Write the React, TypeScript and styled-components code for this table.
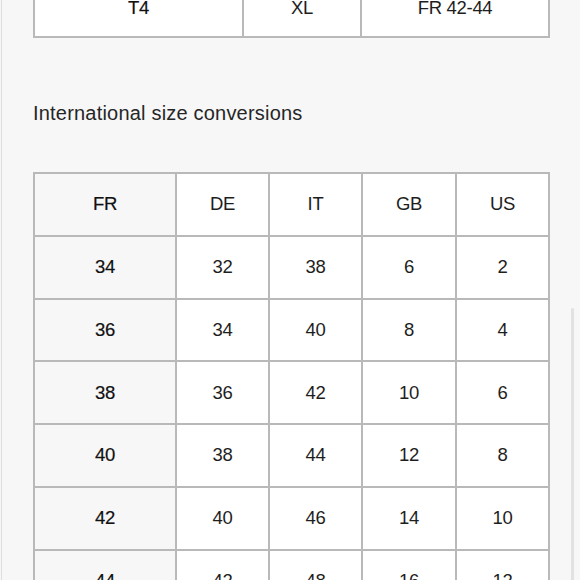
import React from "react";
import styled, { createGlobalStyle } from "styled-components";

const Global = createGlobalStyle`
  html, body { margin: 0; padding: 0; background: #f7f7f7; overflow: hidden; }
  body { font-family: "Liberation Sans", Arial, sans-serif; color: #222; }
`;

const Page = styled.div`
  position: relative;
  width: 580px;
  height: 580px;
  overflow: hidden;
  background: #f7f7f7;
`;

const Panel = styled.div`
  margin-left: 1px;
  border-left: 1px solid #dedede;
  padding-left: 31px;
  height: 100%;
  display: flex;
  flex-direction: column;
`;

const Grid = styled.div<{ $cols: string; $top?: number; $row?: number }>`
  display: grid;
  grid-template-columns: ${(p) => p.$cols};
  grid-auto-rows: ${(p) => p.$row ?? 60.75}px;
  gap: 2px;
  padding: 2px;
  background: #b9b9b9;
  width: 517px;
  box-sizing: border-box;
  margin-top: ${(p) => p.$top ?? 0}px;
  flex-shrink: 0;
`;

const Cell = styled.div<{ $key?: boolean }>`
  display: flex;
  align-items: center;
  justify-content: center;
  background: ${(p) => (p.$key ? "#f7f7f7" : "#ffffff")};
  font-size: 18.5px;
  color: ${(p) => (p.$key ? "#111" : "#1e1e1e")};
  -webkit-text-stroke: ${(p) => (p.$key ? "0.2px #111" : "0")};
  letter-spacing: -0.3px;
`;

const TopCell = styled(Cell)`
  background: #ffffff;
`;

const Heading = styled.h2`
  margin: 63px 0 47px 0;
  font-size: 20px;
  line-height: 24px;
  font-weight: 400;
  color: #262626;
  letter-spacing: 0.2px;
`;

const Scrollbar = styled.div`
  position: absolute;
  left: 571px;
  top: 308px;
  width: 3px;
  height: 280px;
  border-radius: 2px;
  background: #e2e2e2;
`;

const rows = [
  ["FR", "DE", "IT", "GB", "US"],
  ["34", "32", "38", "6", "2"],
  ["36", "34", "40", "8", "4"],
  ["38", "36", "42", "10", "6"],
  ["40", "38", "44", "12", "8"],
  ["42", "40", "46", "14", "10"],
  ["44", "42", "48", "16", "12"],
];

export default function App() {
  return (
    <Page>
      <Global />
      <Panel>
        <Grid $cols="207px 116px 186px" $top={-23} $row={57}>
          <TopCell $key>T4</TopCell>
          <TopCell>XL</TopCell>
          <TopCell>FR 42-44</TopCell>
        </Grid>
        <Heading>International size conversions</Heading>
        <Grid $cols="140px 91px 91px 92px 91px">
          {rows.map((r, i) =>
            r.map((v, j) => (
              <Cell key={`${i}-${j}`} $key={j === 0}>
                {v}
              </Cell>
            ))
          )}
        </Grid>
      </Panel>
      <Scrollbar />
    </Page>
  );
}
